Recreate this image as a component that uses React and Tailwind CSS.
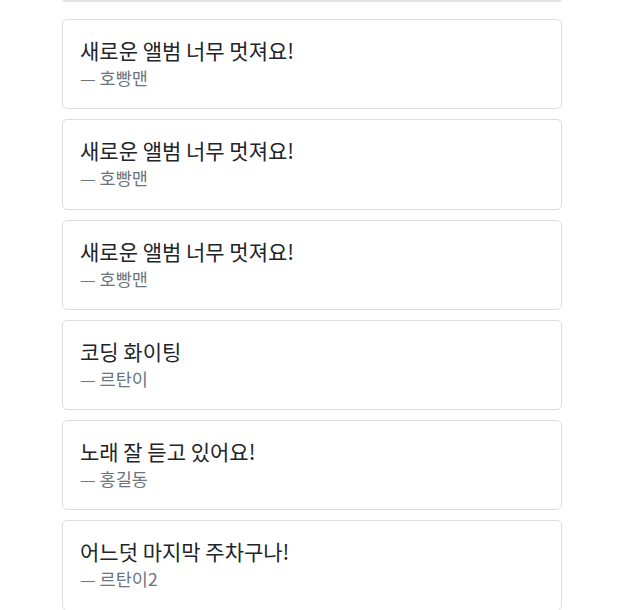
import React from "react";

const COMMENTS = [
  { text: "새로운 앨범 너무 멋져요!", name: "호빵맨" },
  { text: "새로운 앨범 너무 멋져요!", name: "호빵맨" },
  { text: "새로운 앨범 너무 멋져요!", name: "호빵맨" },
  { text: "코딩 화이팅", name: "르탄이" },
  { text: "노래 잘 듣고 있어요!", name: "홍길동" },
  { text: "어느덧 마지막 주차구나!", name: "르탄이2" },
];

export default function App() {
  return (
    <div className="min-h-screen bg-white font-['Noto_Sans_CJK_KR',sans-serif]">
      <div className="w-[500px] ml-[62px]">
        {/* bottom edge of the posting form above */}
        <div className="h-[2px] bg-[#e4e4e4] rounded-b" />
        <div className="flex flex-col gap-[10px] pt-[17px]">
          {COMMENTS.map((c, i) => (
            <div
              key={i}
              className="h-[90.25px] border border-[#dcdcdc] rounded-[5px] px-[17px] pt-[15px]"
            >
              <p className="text-[21px] leading-[30px] text-[#212529]">{c.text}</p>
              <p className="text-[17.5px] leading-[26px] text-[#6c757d]">— {c.name}</p>
            </div>
          ))}
        </div>
      </div>
    </div>
  );
}
